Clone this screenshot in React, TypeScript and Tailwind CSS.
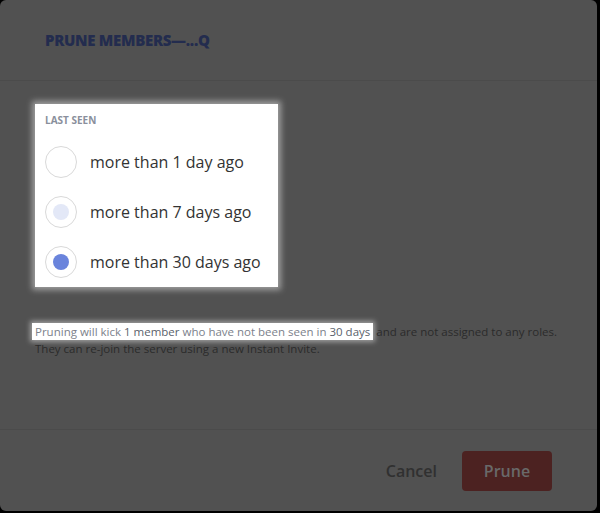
import React from 'react';

const options = [
  { label: 'more than 1 day ago', state: 'none' },
  { label: 'more than 7 days ago', state: 'hover' },
  { label: 'more than 30 days ago', state: 'on' },
];

function Radio({ state }: { state: string }) {
  return (
    <div className="w-8 h-8 rounded-full border border-[#d9d9d9] bg-white flex items-center justify-center shrink-0">
      {state === 'hover' && <div className="w-4 h-4 rounded-full bg-[#e3e8f7]" />}
      {state === 'on' && <div className="w-4 h-4 rounded-full bg-[#6a84dc]" />}
    </div>
  );
}

export default function App() {
  return (
    <div className="w-[600px] h-[513px] bg-black font-['Open_Sans',sans-serif]">
      <div className="w-[597px] h-[511px] bg-[#515151] rounded-md flex flex-col">
        <div className="h-[81px] border-b border-[#4b4b4b] flex items-center px-[45px]">
          <h1 className="text-[15px] font-extrabold text-[#232c4e] tracking-[-0.3px]">PRUNE MEMBERS—...Q</h1>
        </div>
        <div className="flex-1 pt-[23px] px-[35px]">
          <div className="w-[243px] bg-white pt-[9px] pb-[9px] px-[10px] shadow-[0_0_6px_3px_rgba(255,255,255,0.45)]">
            <div className="text-[10px] font-bold text-[#8a8f9c] uppercase leading-[14px]">Last seen</div>
            <div className="mt-[19px] flex flex-col gap-[18px]">
              {options.map(o => (
                <div key={o.label} className="flex items-center gap-[13px]">
                  <Radio state={o.state} />
                  <span className="text-[16px] text-[#333] leading-[20px]">{o.label}</span>
                </div>
              ))}
            </div>
          </div>
          <div className="mt-[36px] text-[11.5px] leading-[17px] text-[#2b2b2b]">
            <span className="bg-white text-[#7c818b] px-[3px] -ml-[3px] py-[1px] shadow-[0_0_5px_2px_rgba(255,255,255,0.45)]">
              Pruning will kick <span className="font-medium text-[#5a5f6b]">1 member</span> who have not been seen in <span className="font-medium text-[#5a5f6b]">30 days</span>
            </span>{' '}
            and are not assigned to any roles.
            <br />
            They can re-join the server using a new Instant Invite.
          </div>
        </div>
        <div className="h-[82px] border-t border-[#4b4b4b] flex items-center justify-end pr-[45px] gap-[25px]">
          <button className="text-[16px] font-semibold text-[#303030]">Cancel</button>
          <button className="w-[90px] h-[40px] rounded bg-[#4c2221] text-[16px] font-semibold text-[#696969]">Prune</button>
        </div>
      </div>
    </div>
  );
}
